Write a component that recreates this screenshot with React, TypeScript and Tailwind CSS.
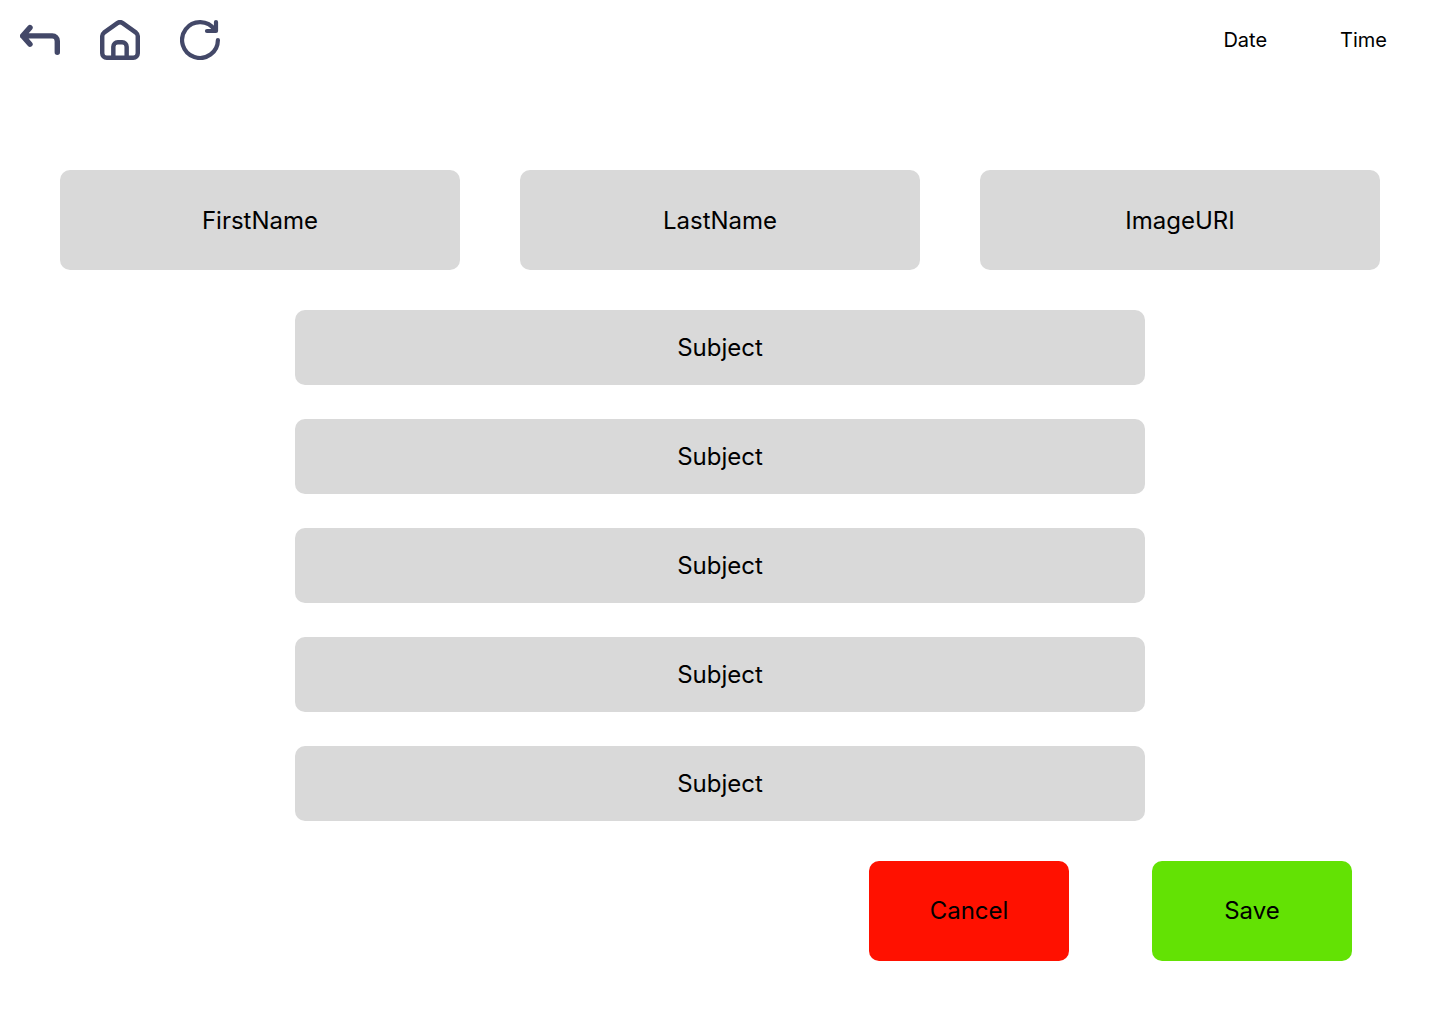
import React from "react";

const iconProps = {
  width: 40,
  height: 40,
  fill: "none",
  stroke: "currentColor",
  strokeWidth: 2,
  strokeLinecap: "round",
  strokeLinejoin: "round",
  "aria-hidden": true,
} as const;

function BackIcon() {
  return (
    <svg {...iconProps} viewBox="0 0 40 40" strokeWidth={5.4}>
      <path d="M10 7.6 2.7 15.9 10 24.2M2.7 15.9H32.3a5 5 0 0 1 5 5V32.2" />
    </svg>
  );
}

function HomeIcon() {
  return (
    <svg {...iconProps} viewBox="3 3 18 18">
      <path d="M4 10.2c0-.6.3-1.1.8-1.5l6-4.3a2 2 0 0 1 2.4 0l6 4.3c.5.4.8.9.8 1.5V18a2 2 0 0 1-2 2H6a2 2 0 0 1-2-2Z" />
      <path d="M9 20v-5a2 2 0 0 1 2-2h2a2 2 0 0 1 2 2v5" />
    </svg>
  );
}

function RefreshIcon() {
  return (
    <svg {...iconProps} viewBox="0 0 40 40" strokeWidth={4.2}>
      <path d="M37.9 20A17.9 17.9 0 1 1 34.8 10" />
      <path d="M36 2.1v8.9h-9" />
    </svg>
  );
}

const navItems = [
  { label: "Back", Icon: BackIcon },
  { label: "Home", Icon: HomeIcon },
  { label: "Refresh", Icon: RefreshIcon },
];

const details = ["FirstName", "LastName", "ImageURI"];
const subjects = [1, 2, 3, 4, 5];

const fieldClass =
  "w-full min-w-0 rounded-[10px] bg-[#d9d9d9] px-4 text-center text-2xl text-black placeholder:text-black placeholder:opacity-100";

export default function App() {
  return (
    <div className="min-h-screen bg-white font-['Inter',sans-serif] text-black">
      <header className="flex items-center justify-between pt-5 pr-[53px] pl-5">
        <nav className="flex gap-10 text-[#434868]">
          {navItems.map(({ label, Icon }) => (
            <button key={label} type="button" aria-label={label}>
              <Icon />
            </button>
          ))}
        </nav>
        <div className="flex gap-[73px] text-xl">
          <span>Date</span>
          <span>Time</span>
        </div>
      </header>

      <form className="pt-[110px] pb-15" onSubmit={(e) => e.preventDefault()}>
        <div className="grid grid-cols-3 gap-15 px-15">
          {details.map((name) => (
            <input
              key={name}
              type="text"
              name={name}
              aria-label={name}
              placeholder={name}
              className={`${fieldClass} h-25`}
            />
          ))}
        </div>

        <div className="mx-auto mt-10 flex max-w-[850px] flex-col gap-[34px]">
          {subjects.map((n) => (
            <input
              key={n}
              type="text"
              name={`subject${n}`}
              aria-label={`Subject ${n}`}
              placeholder="Subject"
              className={`${fieldClass} h-[75px]`}
            />
          ))}
        </div>

        <div className="mt-10 flex justify-end gap-[83px] pr-22 text-2xl">
          <button type="button" className="h-25 w-50 rounded-[10px] bg-[#ff1100]">
            Cancel
          </button>
          <button type="submit" className="h-25 w-50 rounded-[10px] bg-[#63e204]">
            Save
          </button>
        </div>
      </form>
    </div>
  );
}
